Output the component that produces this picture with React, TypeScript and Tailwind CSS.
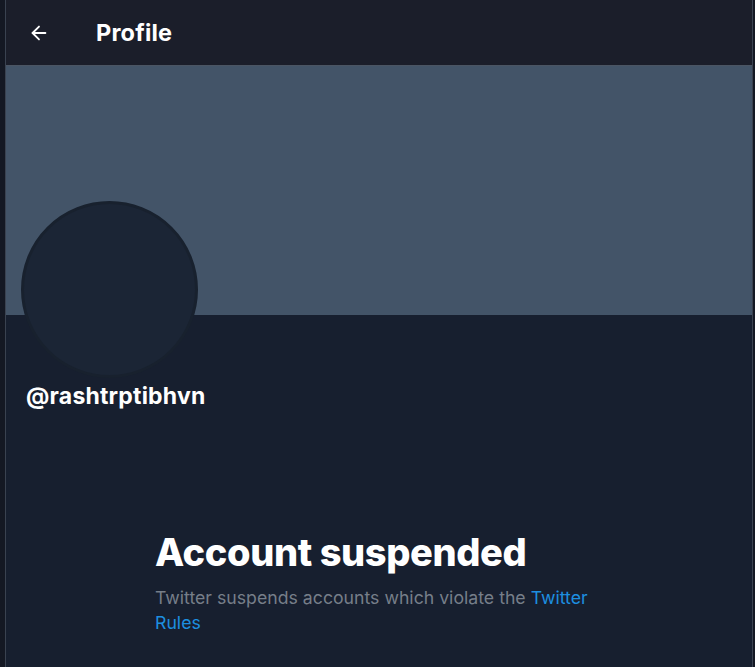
import { ArrowLeft } from "lucide-react";

export default function App() {
  return (
    <div
      className="w-[755px] h-[667px] bg-[#141823] pl-[5px] pr-[2px] overflow-hidden"
      style={{ fontFamily: 'Inter, "Liberation Sans", Arial, sans-serif' }}
    >
      <div className="h-full border-x border-[#3a4250] bg-[#171f2f] flex flex-col">
        {/* header */}
        <div className="h-[66px] shrink-0 bg-[#1b1e2a] flex items-center border-b border-[#4b5563]">
          <ArrowLeft className="ml-[22px] h-[22px] w-[22px] text-white" strokeWidth={2} />
          <h1 className="ml-[46px] text-[23.5px] font-bold text-white tracking-[0.2px]">Profile</h1>
        </div>

        {/* banner */}
        <div className="h-[249px] shrink-0 bg-[#435468]" />

        {/* avatar + handle */}
        <div className="px-[15px]">
          <div className="-mt-[114px] h-[177px] w-[177px] rounded-full bg-[#1b2535] border-[3px] border-[#18212e]" />
          <div className="mt-[4px] pl-[5px] text-[23px] font-bold text-white leading-[28px] tracking-[0.2px]">
            @rashtrptibhvn
          </div>
        </div>

        {/* suspended notice */}
        <div className="mt-[119px] pl-[149px] pr-[20px]">
          <h2 className="text-[38px] font-extrabold text-white leading-[46px] tracking-[-0.4px]">Account suspended</h2>
          <p className="mt-[10px] w-[450px] text-[17.7px] leading-[25px] text-[#767e89]">
            Twitter suspends accounts which violate the <span className="text-[#1d8fe0]">Twitter</span>{" "}
            <span className="text-[#1d8fe0]">Rules</span>
          </p>
        </div>
      </div>
    </div>
  );
}
